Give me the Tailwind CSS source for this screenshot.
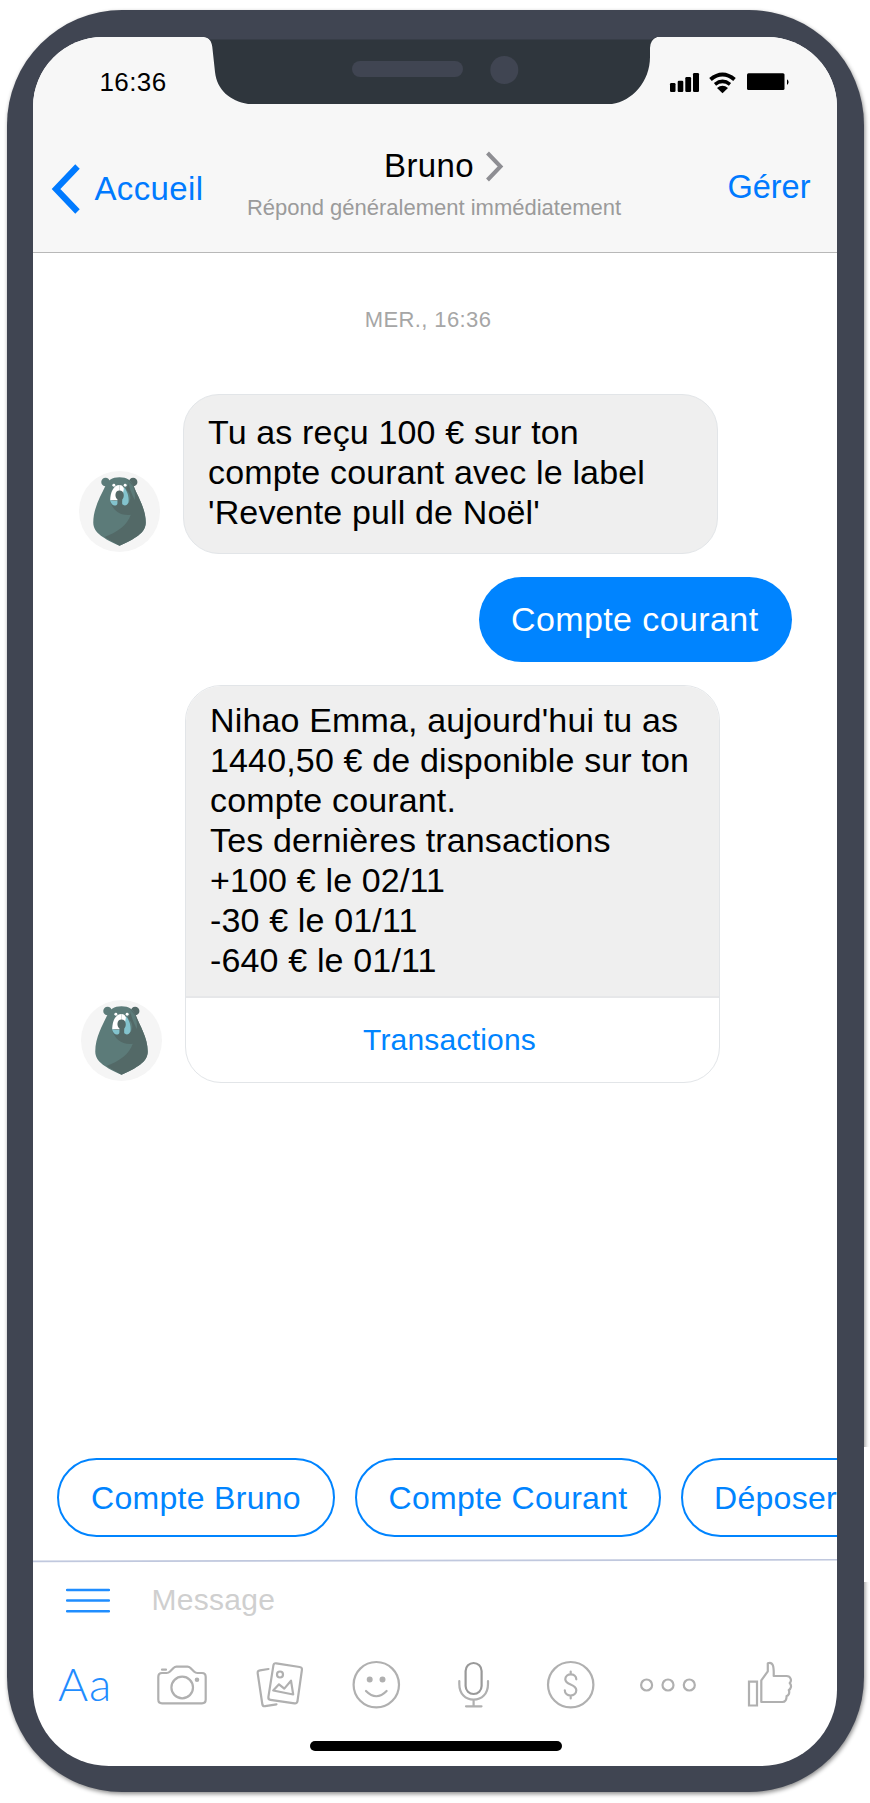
<!DOCTYPE html>
<html lang="fr">
<head>
<meta charset="utf-8">
<title>Bruno</title>
<script src="https://cdn.jsdelivr.net/npm/@tailwindcss/browser@4"></script>
</head>
<body class="bg-white">
<svg class="hidden" aria-hidden="true">
  <symbol id="bear" viewBox="27 18 244 244">
    <circle cx="149" cy="140" r="122" fill="#f5f5f5"/>
    <circle cx="107" cy="51" r="13" fill="#5c7b79"/>
    <circle cx="190" cy="51" r="13" fill="#536967"/>
    <path d="M149 37C172 37 184 46 192 64C202 92 228 130 228 173C228 205 195 222 149 243C103 222 70 205 70 173C70 130 93 92 106 64C114 46 126 37 149 37Z" fill="#5c7b79"/>
    <path d="M173 44C182 50 188 56 192 64C202 92 228 130 228 173C228 205 195 222 149 243L104 217C143 202 172 182 183 150C150 154 130 136 122 113C145 122 165 122 178 112C186 96 180 84 171 76C163 63 184 67 173 44Z" fill="#536967"/>
    <path d="M173 44C178 66 184 84 195 105C197 90 194 78 190 64Z" fill="#5c7b79"/>
    <path d="M149 60C130 60 121 84 121 106H149Z" fill="#fff"/>
    <path d="M149 60C160 60 166 70 163 90L149 92Z" fill="#fff"/>
    <path d="M163 68C174 80 178 100 176 113C171 125 160 123 156 116L158 92Z" fill="#83c3cd"/>
    <path d="M121 105C123 121 139 129 144 115V107Q132 110 121 105Z" fill="#83c3cd"/>
    <path d="M149 77C134 77 134 98 143 104V124H157V104C165 98 164 77 149 77Z" fill="#536967"/>
    <circle cx="132" cy="61" r="4.500" fill="#fff"/>
    <circle cx="166" cy="61" r="4.500" fill="#fff"/>
  </symbol>
</svg>

<main class="relative h-[1803px] w-[870px] overflow-hidden bg-white pt-[10px] pl-[6.500px] font-['Liberation_Sans',Arial,sans-serif]">
  <div class="h-[1782px] w-[857px] rounded-[115px] bg-[#404552] pt-[27px] pl-[26.500px] shadow-[1px_2px_4px_rgba(0,0,0,0.45)]">
    <div class="relative flex h-[1729px] w-[804px] flex-col overflow-hidden rounded-t-[70px] rounded-b-[76px] bg-white">

      <!-- Header -->
      <header class="h-[216px] shrink-0 border-b border-[#b8b8b8] bg-[#f7f7f7]">
        <div class="flex h-[100px] items-start justify-between pt-[32px] pr-[45px] pl-[66.500px]">
          <span class="text-[26px] leading-[26px] tracking-[0.400px]">16:36</span>
          <svg class="mt-[2px] h-[26px] w-[124px]" viewBox="668 71 124 26">
            <rect x="670" y="83" width="5.500" height="9" rx="1.200"/>
            <rect x="677.700" y="80.700" width="5.600" height="11.300" rx="1.200"/>
            <rect x="685.300" y="77" width="5.800" height="15" rx="1.200"/>
            <rect x="693" y="73" width="6" height="19" rx="1.200"/>
            <path d="M710.500 79.500Q722.500 69.500 734.500 79.500" fill="none" stroke="#000" stroke-width="4"/>
            <path d="M715 84.300Q722.500 78.500 730 84.300" fill="none" stroke="#000" stroke-width="3.600"/>
            <path d="M717 88Q722.500 83.500 728 88L722.500 93.300Z"/>
            <rect x="747" y="73.200" width="37.500" height="16.800" rx="1.500"/>
            <path d="M787 79.300Q790.200 82 787 85Z"/>
          </svg>
        </div>
        <div class="grid grid-cols-[200px_400px_1fr] items-start pr-[26.500px] pl-[18px]">
          <div class="flex items-start pt-[26px] text-[#007aff]">
            <svg class="h-[52px] w-[30px]" viewBox="0 0 30 52" fill="none" stroke="#007aff" stroke-width="6.200"><path d="M26.500 3.500L5 26L26.500 48.500"/></svg>
            <span class="mt-[9px] ml-[13.500px] text-[33px] leading-[33px] tracking-[0.350px]">Accueil</span>
          </div>
          <div class="-mt-[1px] flex flex-col items-center pr-[34px]">
            <div class="flex pt-[13px] pl-[21px]">
              <span class="text-[33px] leading-[33px] tracking-[0.400px]">Bruno</span>
              <svg class="mt-[2px] ml-[11px] h-[32px] w-[20px]" viewBox="0 0 20 32" fill="none" stroke="#8e8e93" stroke-width="4"><path d="M2.500 2L15.500 15.500L2.500 29"/></svg>
            </div>
            <span class="mt-[14px] text-[22px] leading-[22px] whitespace-nowrap text-[#9b9b9b]">Répond généralement immédiatement</span>
          </div>
          <span class="justify-self-end pt-[34px] text-[32.500px] leading-[33px] text-[#007aff]">Gérer</span>
        </div>
      </header>

      <!-- Conversation -->
      <section class="flex h-[1205px] shrink-0 flex-col pt-[56px]">
        <p class="pr-[14px] text-center text-[22px] leading-[22px] tracking-[0.400px] text-[#a6a6a6]">MER., 16:36</p>
        <div class="mt-[63px] flex items-end pl-[46px]">
          <svg class="mb-[2px] h-[81px] w-[81px]"><use href="#bear"/></svg>
          <div class="ml-[23px] h-[160px] w-[535px] rounded-[36px] border border-[#e2e5e8] bg-[#efefef] pt-[17px] pl-[24px] text-[34px] leading-[40px] tracking-[0.150px] whitespace-nowrap">Tu as reçu 100 € sur ton<br>compte courant avec le label<br>'Revente pull de Noël'</div>
        </div>
        <div class="mt-[23px] mr-[45px] flex h-[84.500px] w-[313.500px] items-center justify-center self-end rounded-full bg-[#0084ff] pr-[1px] text-[34px] leading-[40px] tracking-[0.400px] whitespace-nowrap text-white">Compte courant</div>
        <div class="mt-[23.500px] flex items-end pl-[48px]">
          <svg class="mb-[2px] h-[81px] w-[81px]"><use href="#bear"/></svg>
          <div class="ml-[23px] h-[398px] w-[535px] overflow-hidden rounded-[36px] border border-[#e2e5e8] bg-white">
            <div class="h-[312px] border-b-2 border-[#e6e7e9] bg-[#efefef] pt-[14px] pl-[24px] text-[34px] leading-[40px] tracking-[0.150px] whitespace-nowrap">Nihao Emma, aujourd'hui tu as<br>1440,50 € de disponible sur ton<br>compte courant.<br>Tes dernières transactions<br>+100 € le 02/11<br>-30 € le 01/11<br>-640 € le 01/11</div>
            <div class="pt-[27px] pr-[6px] text-center text-[30px] leading-[30px] tracking-[0.200px] text-[#0084ff]">Transactions</div>
          </div>
        </div>
      </section>

      <!-- Quick replies -->
      <nav class="flex h-[101px] shrink-0 items-start gap-[20px] pl-[24px] text-[32px] leading-[36px] tracking-[0.300px] whitespace-nowrap text-[#0084ff]">
        <span class="flex h-[79px] w-[278px] shrink-0 items-center justify-center rounded-full border-2 border-[#0084ff] pt-[1px]">Compte Bruno</span>
        <span class="flex h-[79px] w-[306px] shrink-0 items-center justify-center rounded-full border-2 border-[#0084ff] pt-[1px]">Compte Courant</span>
        <span class="flex h-[79px] w-[306px] shrink-0 items-center rounded-full border-2 border-[#0084ff] pt-[1px] pl-[31px]">Déposer</span>
      </nav>

      <!-- Composer -->
      <footer class="flex flex-1 flex-col">
        <svg class="h-[4px] w-full" viewBox="0 0 804 4" preserveAspectRatio="none"><path d="M0 2.300L804 0.700" stroke="#c0c8de" stroke-width="1.800"/></svg>
        <div class="flex items-start pt-[20px] pl-[33px]">
          <svg class="mt-[5px] h-[26px] w-[44px]" viewBox="0 0 44 26" stroke="#1f8dff" stroke-width="2.400" stroke-linecap="round"><path d="M1 2H43M1 12.500H43M1 23.300H43"/></svg>
          <span class="mt-[2px] ml-[41.500px] text-[30px] leading-[30px] tracking-[0.300px] text-[#cfcfcf]">Message</span>
        </div>
        <div class="mt-[43px] flex h-[54px] items-start pl-[24px]">
          <span class="-mt-[1px] w-[56px] pl-[1px] font-['Lato'] text-[46px] leading-[54px] font-light tracking-[0.800px] text-[#1f8dff]">Aa</span>
          <svg class="h-[54px] w-[710px]" viewBox="113 1658 710 54" fill="none" stroke="#b0b0b0" stroke-width="2.200" stroke-linejoin="round" stroke-linecap="round">
            <!-- camera -->
            <path d="M162 1669.700H166"/>
            <path d="M162 1673H166.500Q168.500 1673 170 1671.500L173.500 1668Q174.800 1666.700 176.500 1666.700H187.500Q189.200 1666.700 190.500 1668L194 1671.500Q195.500 1673 197.500 1673H202Q205.700 1673 205.700 1677V1699.500Q205.700 1703.300 202 1703.300H162Q158.300 1703.300 158.300 1699.500V1677Q158.300 1673 162 1673Z"/>
            <circle cx="182.200" cy="1687.500" r="10.800"/>
            <circle cx="197" cy="1679.700" r="1.200" fill="#adadad"/>
            <!-- photos -->
            <path d="M268.500 1669L260 1670.300Q257.300 1670.700 257.700 1673.300L262.300 1704Q262.700 1706.500 265.200 1706.200L276.500 1704.300"/>
            <path d="M276.300 1663.300L299.600 1667Q302.300 1667.400 301.900 1670L297.500 1701Q297.100 1703.700 294.500 1703.300L270.500 1699.800Q268 1699.400 268.400 1696.800L273.400 1665.300Q273.800 1662.900 276.300 1663.300Z"/>
            <circle cx="280" cy="1674.500" r="3"/>
            <path d="M273.200 1690.500L279 1684.300L284.300 1688.600L291 1680.700L293.200 1694.500Z"/>
            <!-- smiley -->
            <circle cx="376.300" cy="1684.700" r="22.700"/>
            <circle cx="369.700" cy="1679.500" r="1.900" fill="#adadad"/>
            <circle cx="382.500" cy="1679.500" r="1.900" fill="#adadad"/>
            <path d="M366 1691Q376.300 1701.500 386.600 1691"/>
            <!-- microphone -->
            <rect x="465.600" y="1663" width="16" height="31" rx="8" stroke="#999"/>
            <path d="M459.300 1681V1684C459.300 1694 465.500 1699.700 473.600 1699.700S488 1694 488 1684V1681M473.600 1700V1706M466 1706.300H481.500"/>
            <!-- payment -->
            <circle cx="570.700" cy="1684.700" r="22.700"/>
            <path d="M576.300 1679.300C576.300 1672.700 565.300 1672.700 565.300 1679.300C565.300 1685.500 576.300 1683.500 576.300 1690.300C576.300 1697.200 564.800 1697.200 564.800 1690.300M570.700 1671.500V1674.500M570.700 1695.500V1698.500"/>
            <!-- more -->
            <circle cx="646.600" cy="1685" r="5.500"/><circle cx="668" cy="1685" r="5.500"/><circle cx="689.300" cy="1685" r="5.500"/>
            <!-- thumb up -->
            <path d="M749 1681.700H757V1705.500H749Z" stroke-linejoin="miter"/>
            <path d="M761.300 1702V1680.300L767.800 1671.300V1663.200C773 1661.500 774 1666 773.700 1676H786.500C791 1676 792 1681 789.700 1683C792 1685.500 791 1689 788.800 1690C790 1693 788.500 1695.500 786.600 1696C786.600 1699 785.500 1702 782.500 1702Z"/>
          </svg>
        </div>
        <div class="mt-[29px] ml-[277px] h-[10px] w-[252px] rounded-full bg-black"></div>
      </footer>

      <!-- Notch over the screen -->
      <svg class="absolute top-0 left-[170px] h-[68px] w-[456px]" viewBox="203 37 456 68">
        <path d="M204 37C209 37.500 211.500 41 212.300 47L215 72C217 90 230 101 248 104H612C632 101 650 82 650 57V48Q650 40 657 37Z" fill="#2f363d"/>
        <path d="M204 37C207 37.300 208.500 38 209.500 39.500H652Q653.500 38 657 37Z" fill="#404552"/>
        <rect x="352" y="61" width="111" height="16" rx="8" fill="#404552"/>
        <circle cx="504.300" cy="70" r="14" fill="#404552"/>
      </svg>
    </div>
  </div>
  <div class="absolute top-[1447px] left-[864px] h-[135px] w-[6px] bg-white"></div>
</main>
</body>
</html>
